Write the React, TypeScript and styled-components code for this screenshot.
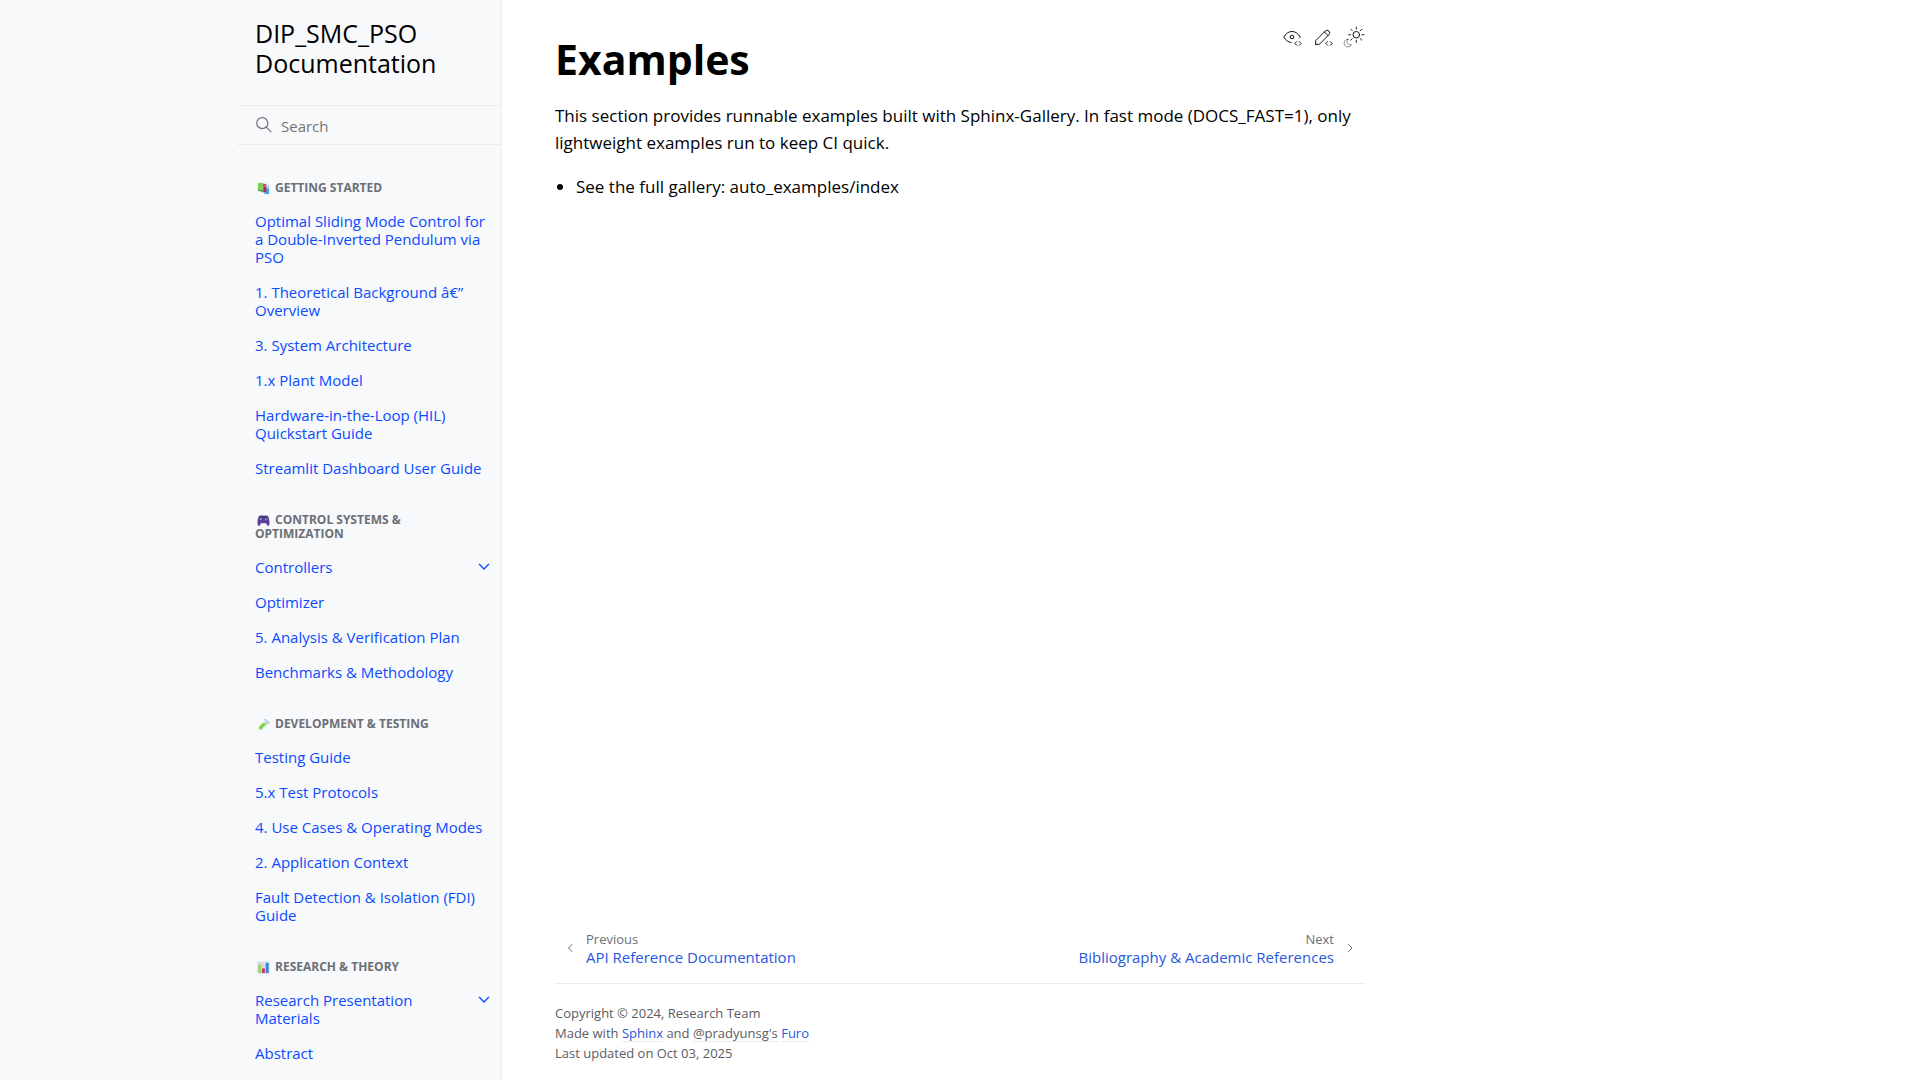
import React from "react";
import styled, { createGlobalStyle } from "styled-components";

const GlobalStyle = createGlobalStyle`
  *, *::before, *::after { box-sizing: border-box; }
  body {
    margin: 0;
    background: #fff;
    color: #000;
    font-family: "Open Sans", "Noto Sans", sans-serif;
    font-size: 17px;
    line-height: 27px;
  }
`;

const Page = styled.div`
  display: flex;
  height: 100vh;
  overflow: hidden;
`;

const SidebarDrawer = styled.aside`
  display: flex;
  justify-content: flex-end;
  flex: none;
  width: calc(50% - 458px);
  min-width: 265px;
  background: #f8f9fb;
  border-right: 1px solid #eeebee;
`;

const Sidebar = styled.div`
  display: flex;
  flex-direction: column;
  width: 264px;
`;

const Brand = styled.a`
  padding: 18px 18px 27px;
  color: #000;
  font-size: 25px;
  line-height: 30px;
  text-decoration: none;
`;

const SearchBar = styled.form`
  display: flex;
  align-items: center;
  gap: 8px;
  height: 40px;
  flex: none;
  padding-left: 17px;
  border: solid #eeebee;
  border-width: 1px 0;
`;

const SearchInput = styled.input`
  flex: 1;
  min-width: 0;
  height: 36px;
  padding: 2px 0 0;
  border: 0;
  outline: 0;
  background: transparent;
  font: 15px/20px "Open Sans", "Noto Sans", sans-serif;
  &::placeholder { color: #757575; opacity: 1; }
`;

const Nav = styled.nav`
  padding-top: 9px;
`;

const Caption = styled.h2`
  margin: 27px 18px 9px;
  color: #6b6f76;
  font-size: 12px;
  font-weight: 700;
  line-height: 14px;
  text-transform: uppercase;
  svg { vertical-align: -3px; margin: -4px 5px 0 2px; }
`;

const NavList = styled.ul`
  margin: 0;
  padding: 0;
  list-style: none;
`;

const NavItem = styled.li`
  display: flex;
  align-items: flex-start;
`;

const NavLink = styled.a`
  flex: 1;
  padding: 8px 10px 9px 18px;
  color: #0a4bff;
  font-size: 15px;
  line-height: 18px;
  text-decoration: none;
`;

const Expander = styled.button`
  display: flex;
  align-items: center;
  justify-content: center;
  width: 34px;
  height: 33px;
  padding: 0;
  border: 0;
  background: none;
  color: #0a4bff;
`;

const Main = styled.main`
  display: flex;
  flex-direction: column;
  flex: 0 1 916px;
  min-width: 0;
  padding: 26px 53px 17px;
`;

const Top = styled.div`
  display: flex;
  align-items: flex-start;
  justify-content: space-between;
`;

const Title = styled.h1`
  margin: 6px 0 16px;
  font-size: 41px;
  font-weight: 700;
  line-height: 54px;
`;

const Tools = styled.div`
  display: flex;
  gap: 9px;
`;

const ToolLink = styled.a`
  display: flex;
  color: #000;
`;

const ToolButton = styled.button`
  display: flex;
  padding: 0;
  border: 0;
  background: none;
  color: #000;
`;

const Article = styled.article`
  flex: 1;
`;

const Paragraph = styled.p`
  margin: 0 0 17px;
`;

const BulletList = styled.ul`
  margin: 0;
  padding-left: 21px;
`;

const Related = styled.nav`
  display: flex;
  justify-content: space-between;
  padding: 0 8px 17px;
  border-bottom: 1px solid #eeebee;
`;

const PageLink = styled.a`
  display: flex;
  align-items: center;
  gap: 9px;
  color: #2757dd;
  text-decoration: none;
`;

const Arrow = styled.span`
  display: flex;
  justify-content: center;
  width: 14px;
  color: #6b6f76;
`;

const PageInfo = styled.span<{ $end?: boolean }>`
  display: flex;
  flex-direction: column;
  text-align: ${(p) => (p.$end ? "right" : "left")};
  font-size: 15px;
  line-height: 18px;
`;

const Context = styled.span`
  color: #6b6f76;
  font-size: 13px;
  line-height: 18px;
`;

const Footer = styled.footer`
  padding-top: 19px;
  color: #5a5c63;
  font-size: 13px;
  line-height: 20px;
`;

const FooterLink = styled.a<{ $muted?: boolean }>`
  color: ${(p) => (p.$muted ? "#5a5c63" : "#2757dd")};
  text-decoration: underline;
  text-decoration-color: #eeebee;
  text-underline-offset: 3px;
`;

const outline = {
  fill: "none",
  stroke: "currentColor",
  strokeLinecap: "round" as const,
  strokeLinejoin: "round" as const,
};

const SearchIcon = () => (
  <svg width="19" height="19" viewBox="0 0 24 24" {...outline} stroke="#6b6f76" strokeWidth="1.5" aria-hidden="true">
    <circle cx="10.5" cy="9" r="7" />
    <path d="M21.5 20l-6-6" />
  </svg>
);

const EyeIcon = () => (
  <svg width="22" height="22" viewBox="0 0 24 24" {...outline} strokeWidth="1" aria-hidden="true">
    <path d="M10 12a2 2 0 1 0 4 0a2 2 0 0 0 -4 0" />
    <path d="M11.11 17.958c-3.209 -.307 -5.91 -2.293 -8.11 -5.958c2.4 -4 5.4 -6 9 -6c3.6 0 6.6 2 9 6c-.21 .352 -.427 .688 -.647 1.008" />
    <path d="M20 21l2 -2l-2 -2" />
    <path d="M17 17l-2 2l2 2" />
  </svg>
);

const PencilIcon = () => (
  <svg width="22" height="22" viewBox="0 0 24 24" {...outline} strokeWidth="1" aria-hidden="true">
    <path d="M4 20h4l10.5 -10.5a2.828 2.828 0 1 0 -4 -4l-10.5 10.5v4" />
    <path d="M13.5 6.5l4 4" />
    <path d="M20 21l2 -2l-2 -2" />
    <path d="M17 17l-2 2l2 2" />
  </svg>
);

const SunMoonIcon = () => (
  <svg width="22" height="22" viewBox="0 0 24 24" {...outline} strokeWidth="1" aria-hidden="true">
    <path
      strokeWidth="0.5"
      d="M5.411 14.504C5.471 14.504 5.532 14.504 5.591 14.504C3.639 16.319 4.383 19.569 6.931 20.352C7.693 20.586 8.512 20.551 9.25 20.252C8.023 23.207 4.056 23.725 2.11 21.184C0.166 18.642 1.702 14.949 4.874 14.536C5.051 14.512 5.231 14.5 5.411 14.5Z"
    />
    <circle cx="14.5" cy="9.55" r="3.6" />
    <path d="M14.5 3.25v-2M14.5 15.85v2M10.04 5.09L8.63 3.68M19 14.05l1.41 1.41M8.2 9.55h-2M20.8 9.55h2M10.04 14.01l-1.41 1.41M19 5.05l1.41-1.41" />
  </svg>
);

const Chevron = ({ d, size, width }: { d: string; size: number; width: number }) => (
  <svg width={size} height={size} viewBox="0 0 24 24" {...outline} strokeWidth={width} aria-hidden="true">
    <path d={d} />
  </svg>
);

const BooksIcon = () => (
  <svg width="13" height="13" viewBox="0 0 14 14" aria-hidden="true">
    <path d="M8 4h5v9H8z" fill="#3fa4ee" />
    <path d="M10 4h3v3h-3z" fill="#a9d5f5" />
    <path d="M5 2h5v9H5z" fill="#c2264f" />
    <path d="M8 3h2v2H8z" fill="#f08aa0" />
    <path d="M1 1h6v9H1z" fill="#7fce55" />
    <path d="M1 8l6 1v2L1 9z" fill="#4c9a6a" />
  </svg>
);

const GamepadIcon = () => (
  <svg width="13" height="13" viewBox="0 0 14 14" aria-hidden="true">
    <path d="M3 2h8c1.5 0 2.2 4 2.5 7 .3 4-2 5-3 2.5L10 10H4l-.5 1.5C2.5 14 .2 13 .5 9 .8 6 1.5 2 3 2z" fill="#5b3f99" />
    <path d="M3.2 2h7.6l.8 2H2.4z" fill="#46397a" />
    <circle cx="4" cy="5.5" r="1.2" fill="#8ea0e8" />
    <circle cx="10" cy="4.5" r=".7" fill="#42d37a" />
    <circle cx="9" cy="6" r=".7" fill="#4fb7f0" />
    <circle cx="11" cy="6" r=".7" fill="#f06a8a" />
  </svg>
);

const TestTubeIcon = () => (
  <svg width="13" height="13" viewBox="0 0 14 14" aria-hidden="true">
    <path d="M9 2l4 3-8 8c-2 1-4-1-3-3z" fill="#cfe7f5" />
    <path d="M6 5.5h5.5L5 12.5c-2 1-4-1-3-3z" fill="#9be052" />
    <path d="M3 11l5-5" stroke="#55b53a" />
    <path d="M8.5 1.5l5 4" stroke="#a9cdea" strokeWidth="1.5" strokeLinecap="round" />
  </svg>
);

const BarChartIcon = () => (
  <svg width="13" height="13" viewBox="0 0 14 14" aria-hidden="true">
    <rect x=".5" y=".5" width="13" height="13" rx="1" fill="#dcd9e4" />
    <path d="M.5 5h13M.5 9h13" stroke="#c5c1d1" strokeWidth=".5" />
    <path d="M1.5 4h3v9h-3z" fill="#8edb62" />
    <path d="M5.5 8h3v5h-3z" fill="#d02f63" />
    <path d="M9.5 2h3v11h-3z" fill="#2f86dd" />
  </svg>
);

type Item = { label: string; expandable?: boolean };

const sections: { title: string; icon: React.ReactNode; items: Item[] }[] = [
  {
    title: "Getting Started",
    icon: <BooksIcon />,
    items: [
      { label: "Optimal Sliding Mode Control for a Double-Inverted Pendulum via PSO" },
      { label: "1. Theoretical Background \u00e2\u20ac\u201d Overview" },
      { label: "3. System Architecture" },
      { label: "1.x Plant Model" },
      { label: "Hardware-in-the-Loop (HIL) Quickstart Guide" },
      { label: "Streamlit Dashboard User Guide" },
    ],
  },
  {
    title: "Control Systems & Optimization",
    icon: <GamepadIcon />,
    items: [
      { label: "Controllers", expandable: true },
      { label: "Optimizer" },
      { label: "5. Analysis & Verification Plan" },
      { label: "Benchmarks & Methodology" },
    ],
  },
  {
    title: "Development & Testing",
    icon: <TestTubeIcon />,
    items: [
      { label: "Testing Guide" },
      { label: "5.x Test Protocols" },
      { label: "4. Use Cases & Operating Modes" },
      { label: "2. Application Context" },
      { label: "Fault Detection & Isolation (FDI) Guide" },
    ],
  },
  {
    title: "Research & Theory",
    icon: <BarChartIcon />,
    items: [{ label: "Research Presentation Materials", expandable: true }, { label: "Abstract" }],
  },
];

export default function App() {
  return (
    <>
      <GlobalStyle />
      <Page>
        <SidebarDrawer>
          <Sidebar>
            <Brand href="#">DIP_SMC_PSO Documentation</Brand>
            <SearchBar role="search">
              <SearchIcon />
              <SearchInput type="search" placeholder="Search" aria-label="Search" />
            </SearchBar>
            <Nav aria-label="Contents">
              {sections.map((section) => (
                <React.Fragment key={section.title}>
                  <Caption>
                    {section.icon}
                    {section.title}
                  </Caption>
                  <NavList>
                    {section.items.map((item) => (
                      <NavItem key={item.label}>
                        <NavLink href="#">{item.label}</NavLink>
                        {item.expandable && (
                          <Expander type="button" aria-label={`Toggle ${item.label}`}>
                            <Chevron d="M5 8l7 7 7-7" size={16} width={2} />
                          </Expander>
                        )}
                      </NavItem>
                    ))}
                  </NavList>
                </React.Fragment>
              ))}
            </Nav>
          </Sidebar>
        </SidebarDrawer>
        <Main>
          <Article>
            <Top>
              <Title>Examples</Title>
              <Tools>
                <ToolLink href="#" aria-label="View this page">
                  <EyeIcon />
                </ToolLink>
                <ToolLink href="#" aria-label="Edit this page">
                  <PencilIcon />
                </ToolLink>
                <ToolButton type="button" aria-label="Toggle light and dark mode">
                  <SunMoonIcon />
                </ToolButton>
              </Tools>
            </Top>
            <Paragraph>
              This section provides runnable examples built with Sphinx-Gallery. In fast mode (DOCS_FAST=1), only
              lightweight examples run to keep CI quick.
            </Paragraph>
            <BulletList>
              <li>See the full gallery: auto_examples/index</li>
            </BulletList>
          </Article>
          <Related aria-label="Related pages">
            <PageLink href="#">
              <Arrow>
                <Chevron d="M16 5l-7 7 7 7" size={12} width={2} />
              </Arrow>
              <PageInfo>
                <Context>Previous</Context>
                <span>API Reference Documentation</span>
              </PageInfo>
            </PageLink>
            <PageLink href="#">
              <PageInfo $end>
                <Context>Next</Context>
                <span>Bibliography &amp; Academic References</span>
              </PageInfo>
              <Arrow>
                <Chevron d="M9 5l7 7-7 7" size={12} width={2} />
              </Arrow>
            </PageLink>
          </Related>
          <Footer>
            <div>Copyright © 2024, Research Team</div>
            <div>
              Made with <FooterLink href="#">Sphinx</FooterLink> and{" "}
              <FooterLink href="#" $muted>
                @pradyunsg's
              </FooterLink>{" "}
              <FooterLink href="#">Furo</FooterLink>
            </div>
            <div>Last updated on Oct 03, 2025</div>
          </Footer>
        </Main>
      </Page>
    </>
  );
}
